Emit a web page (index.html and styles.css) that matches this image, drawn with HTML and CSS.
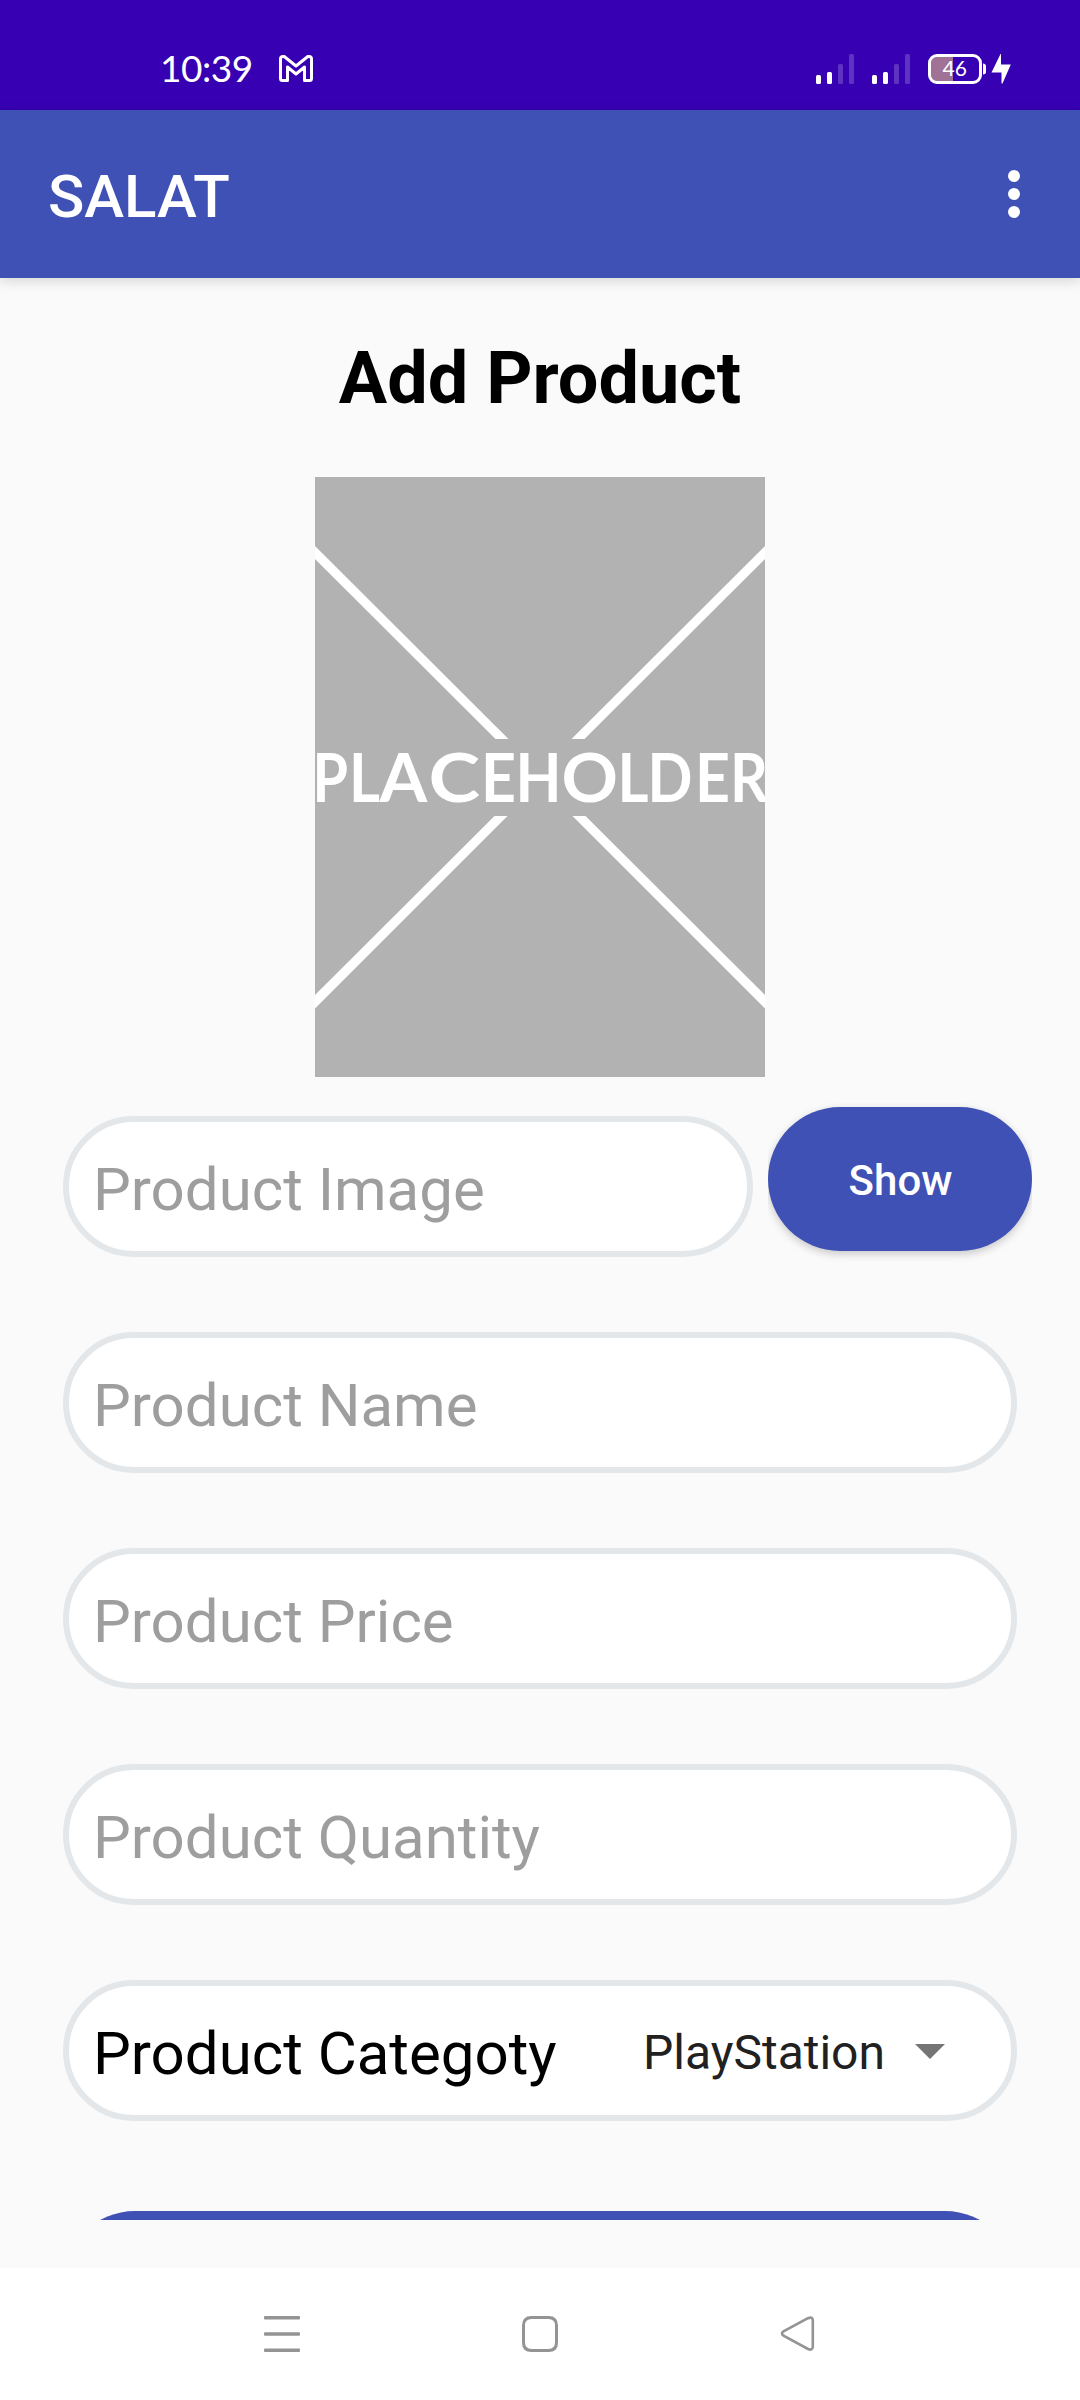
FILE: index.html
```html
<!DOCTYPE html>
<html lang="en">
<head>
<meta charset="utf-8">
<title>SALAT</title>
<link rel="stylesheet" href="styles.css">
</head>
<body>
<div class="screen">
  <header class="status">
    <span class="time">10:39</span>
    <svg class="mail" width="34" height="27" viewBox="0 0 34 27">
      <path d="M1.500 4Q1.500 1.500 4 1.500H5.200L17 11 28.800 1.500H30Q32.500 1.500 32.500 4V23.500Q32.500 25.500 30.500 25.500H25.500V12L17 19 8.500 12V25.500H3.500Q1.500 25.500 1.500 23.500Z" fill="none" stroke="#fff" stroke-width="3" stroke-linejoin="round"/>
    </svg>
    <svg class="indicators" width="196" height="30" viewBox="0 0 196 30">
      <g fill="#fff">
        <rect x="0" y="21" width="5" height="9" rx="1.500"/><rect x="11" y="18" width="5" height="12" rx="1.500"/>
        <rect x="56" y="21" width="5" height="9" rx="1.500"/><rect x="67" y="18" width="5" height="12" rx="1.500"/>
      </g>
      <g fill="#fff" fill-opacity=".2">
        <rect x="22" y="10" width="5" height="20" rx="1.500"/><rect x="33" y="0" width="5" height="30" rx="1.500"/>
        <rect x="78" y="10" width="5" height="20" rx="1.500"/><rect x="89" y="0" width="5" height="30" rx="1.500"/>
      </g>
      <path d="M137 3H121Q115 3 115 9V21Q115 27 121 27H137Z" fill="#a07396"/>
      <rect x="113.500" y="1.500" width="51" height="27" rx="7.500" fill="none" stroke="#fff" stroke-width="3"/>
      <path d="M167 9.500Q170 10 170 12V18Q170 20 167 20.500Z" fill="#fff"/>
      <path d="M184.500 0H185V10.500H194.800L186.500 29.500H185.500V18.500H175.500Z" fill="#fff"/>
      <text class="charge" x="126.500" y="22">46</text>
    </svg>
  </header>
  <div class="appbar">
    <span class="app-title">SALAT</span>
    <svg width="12" height="48" viewBox="0 0 12 48" fill="#fff"><circle cx="6" cy="6" r="6"/><circle cx="6" cy="24" r="6"/><circle cx="6" cy="42" r="6"/></svg>
  </div>
  <main class="content">
    <h1 class="heading">Add Product</h1>
    <svg class="picture" width="450" height="600" viewBox="0 0 450 600">
      <rect width="450" height="600" fill="#b2b2b2"/>
      <g fill="#fff">
        <path d="M0 69L193.500 262H180.500L0 82Z"/>
        <path d="M450 69L256.500 262H269.500L450 82Z"/>
        <path d="M0 518L179.500 339H192.500L0 531.500Z"/>
        <path d="M450 518L270.500 339H257.500L450 531.500Z"/>
      </g>
      <text class="picture-label" y="325"><tspan x="-2.500" textLength="35.500" lengthAdjust="spacingAndGlyphs">P</tspan><tspan x="34" textLength="31" lengthAdjust="spacingAndGlyphs">L</tspan><tspan x="64.500" textLength="47.700" lengthAdjust="spacingAndGlyphs">A</tspan><tspan x="113.400" textLength="51.600" lengthAdjust="spacingAndGlyphs">C</tspan><tspan x="166" textLength="35" lengthAdjust="spacingAndGlyphs">E</tspan><tspan x="200.600" textLength="46" lengthAdjust="spacingAndGlyphs">H</tspan><tspan x="246.400" textLength="56.500" lengthAdjust="spacingAndGlyphs">O</tspan><tspan x="302.600" textLength="31" lengthAdjust="spacingAndGlyphs">L</tspan><tspan x="332.500" textLength="45" lengthAdjust="spacingAndGlyphs">D</tspan><tspan x="380" textLength="35" lengthAdjust="spacingAndGlyphs">E</tspan><tspan x="415" textLength="38" lengthAdjust="spacingAndGlyphs">R</tspan></text>
    </svg>
    <div class="image-row">
      <div class="field hint">Product Image</div>
      <div class="show-wrap"><button class="show">Show</button></div>
    </div>
    <div class="field hint">Product Name</div>
    <div class="field hint">Product Price</div>
    <div class="field hint">Product Quantity</div>
    <div class="field category">
      <span>Product Categoty</span>
      <span class="choice">PlayStation</span>
      <svg width="30" height="15" viewBox="0 0 30 15"><path d="M0 0H30L15 15Z" fill="#757575"/></svg>
    </div>
    <div class="submit"></div>
  </main>
  <nav class="navbar">
    <svg width="36" height="36" viewBox="0 0 36 36" fill="#949494"><rect y="0" width="36" height="3.400" rx="1"/><rect y="16.200" width="36" height="3.600" rx="1"/><rect y="32.600" width="36" height="3.400" rx="1"/></svg>
    <svg width="36" height="36" viewBox="0 0 36 36"><path d="M9.500 1.500H26.500Q34.500 1.500 34.500 9.500V26.500Q34.500 34.500 26.500 34.500H9.500Q1.500 34.500 1.500 26.500V9.500Q1.500 1.500 9.500 1.500Z" fill="none" stroke="#949494" stroke-width="3"/></svg>
    <svg width="36" height="36" viewBox="0 0 36 36"><path d="M28 2.200L3.500 15.300Q.5 17.500 3.500 19.700L28 33Q32.500 34.800 32.800 31V4.200Q32.500 .4 28 2.200Z" fill="none" stroke="#949494" stroke-width="2.600"/></svg>
  </nav>
</div>
</body>
</html>
```
FILE: styles.css
```css
* { box-sizing: border-box; }
body { margin: 0; font-family: Roboto, sans-serif; }
svg { display: block; }
.screen {
  width: 1080px;
  height: 2400px;
  display: flex;
  flex-direction: column;
  background: #fafafa;
  overflow: hidden;
}
.status {
  height: 110px;
  padding: 54px 68px 0 160px;
  display: flex;
  align-items: flex-start;
  background: #3700b3;
  color: #fff;
}
.time {
  width: 119px;
  font: 400 37px/30px Lato, sans-serif;
  letter-spacing: -0.5px;
  margin-top: -1px;
}
.mail { margin-top: 1px; }
.indicators { margin-left: auto; }
.charge { font: 400 21px Lato, sans-serif; fill: #fff; }
.appbar {
  position: relative;
  height: 168px;
  padding: 0 60px 0 48px;
  display: flex;
  align-items: center;
  justify-content: space-between;
  background: #3f51b5;
  color: #fff;
  box-shadow: 0 3px 12px rgba(0, 0, 0, .15);
}
.app-title { font-size: 60px; font-weight: 500; line-height: 70px; padding-top: 5px; }
.content {
  height: 1942px;
  overflow: hidden;
  padding: 59px 63px 0;
}
.heading {
  margin: 0;
  font-size: 72px;
  line-height: 84px;
  font-weight: 700;
  text-align: center;
  color: #000;
}
.picture { margin: 56px auto 30px; }
.picture-label { font: 700 67.500px Lato, sans-serif; fill: #fff; }
.image-row {
  display: flex;
  gap: 15px;
  height: 225px;
  margin-right: -15px;
}
.image-row .field { width: 690px; margin-top: 9px; }
.show-wrap { width: 264px; overflow: hidden; margin: -10px 0 0; padding-top: 10px; }
.show {
  display: block;
  width: 264px;
  height: 144px;
  border: 0;
  border-radius: 72px;
  background: #3f51b5;
  color: #fff;
  font: 500 42px/48px Roboto, sans-serif;
  padding: 3px 0 0 1px;
  box-shadow: 0 3px 8px rgba(0, 0, 0, .2);
}
.field {
  height: 141px;
  margin-bottom: 75px;
  padding: 7px 24px 0;
  border: 6px solid #e3e7ea;
  border-radius: 70.5px;
  background: #fff;
  display: flex;
  align-items: center;
  font-size: 60px;
  line-height: 70px;
}
.hint { color: #9e9e9e; }
.category { color: #000; margin-bottom: 90px; padding-right: 66px; }
.choice { margin-left: auto; margin-right: 30px; padding-bottom: 2px; font-size: 48px; color: #212121; }
.category svg { margin-bottom: 5px; }
.submit { height: 144px; border-radius: 72px; background: #3f51b5; }
.navbar {
  height: 132px;
  margin-top: 48px;
  padding: 0 264px;
  display: flex;
  align-items: center;
  justify-content: space-between;
  background: #fff;
}
```
